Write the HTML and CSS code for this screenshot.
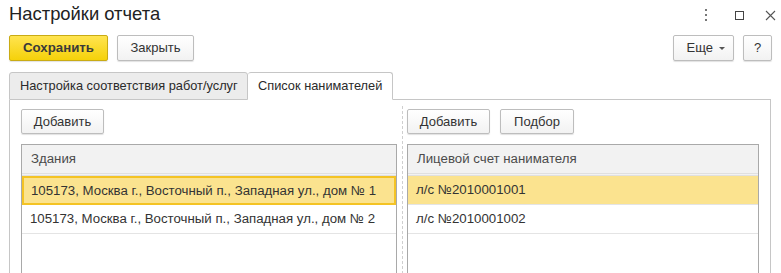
FILE: index.html
```html
<!DOCTYPE html>
<html lang="ru">
<head>
<meta charset="utf-8">
<title>Настройки отчета</title>
<link rel="stylesheet" href="styles.css">
</head>
<body>
<div class="window">
  <header class="titlebar">
    <h1 class="title">Настройки отчета</h1>
    <div class="win-ctrls">
      <svg class="ico ico-menu" width="10" height="14" viewBox="0 0 10 14"><rect x="4" y="1" width="2" height="2" fill="#777"/><rect x="4" y="6" width="2" height="2" fill="#777"/><rect x="4" y="11" width="2" height="2" fill="#777"/></svg>
      <svg class="ico ico-max" width="10" height="14" viewBox="0 0 10 14"><rect x="0.5" y="3.5" width="8" height="8" fill="none" stroke="#444"/></svg>
      <svg class="ico ico-close" width="11" height="14" viewBox="0 0 11 14"><path d="M1 3 L10 12 M10 3 L1 12" stroke="#555" stroke-width="1.1"/></svg>
    </div>
  </header>

  <div class="toolbar">
    <button class="btn btn-primary">Сохранить</button>
    <button class="btn btn-close">Закрыть</button>
    <div class="spacer"></div>
    <button class="btn btn-more">Еще <span class="caret"></span></button>
    <button class="btn btn-help">?</button>
  </div>

  <div class="tabs">
    <div class="tab">Настройка соответствия работ/услуг</div>
    <div class="tab tab-active">Список нанимателей</div>
    <div class="tab-fill"></div>
  </div>

  <div class="panel">
    <div class="col col-left">
      <div class="cmdbar">
        <button class="btn btn-small">Добавить</button>
      </div>
      <div class="grid">
        <div class="grid-head">Здания</div>
        <div class="grid-row row-selected row-focused">105173, Москва г., Восточный п., Западная ул., дом № 1</div>
        <div class="grid-row">105173, Москва г., Восточный п., Западная ул., дом № 2</div>
      </div>
    </div>
    <div class="separator"></div>
    <div class="col col-right">
      <div class="cmdbar">
        <button class="btn btn-small">Добавить</button>
        <button class="btn btn-small btn-pick">Подбор</button>
      </div>
      <div class="grid">
        <div class="grid-head">Лицевой счет нанимателя</div>
        <div class="grid-row row-selected">л/с №2010001001</div>
        <div class="grid-row">л/с №2010001002</div>
      </div>
    </div>
  </div>
</div>
</body>
</html>
```

FILE: styles.css
```css
* { box-sizing: border-box; }

html, body {
  margin: 0;
  padding: 0;
  background: #fff;
  overflow: hidden;
  height: 273px;
}

body {
  font-family: "Liberation Sans", Arial, sans-serif;
  font-size: 13.25px;
  color: #333;
}

.window {
  padding: 0 10px 0 9px;
}

.titlebar {
  display: flex;
  align-items: center;
  height: 28px;
}

.title {
  margin: 0;
  font-weight: normal;
  font-size: 18.4px;
  color: #222;
  flex: 1;
  line-height: 28px;
}

.win-ctrls {
  display: flex;
  align-items: center;
  margin-right: -5px;
  padding-top: 2px;
}

.ico { display: block; }

.ico-max { margin-left: 24px; }

.ico-close { margin-left: 20px; }

.toolbar {
  display: flex;
  align-items: center;
  margin-top: 7px;
  height: 26px;
}

.spacer { flex: 1; }

.btn {
  font-family: inherit;
  font-size: 13px;
  color: #333;
  height: 26px;
  padding: 0 12px;
  border: 1px solid #bdbdbd;
  border-radius: 2px;
  background: linear-gradient(#ffffff, #f2f2f2);
  box-shadow: 0 1px 1px rgba(0,0,0,0.12);
  cursor: default;
  line-height: 22px;
  white-space: nowrap;
}

.btn-primary {
  width: 99px;
  font-weight: bold;
  color: #3a3a3a;
  background: linear-gradient(#ffe450, #f5d10a);
  border-color: #c9ab14;
  font-size: 13.25px;
}

.btn-close {
  margin-left: 9px;
  width: 77px;
}

.btn-more {
  width: 61px;
  padding: 0 0 0 4px;
}

.caret {
  display: inline-block;
  width: 0;
  height: 0;
  border-left: 3px solid transparent;
  border-right: 3px solid transparent;
  border-top: 3px solid #555;
  vertical-align: middle;
  margin-left: 2px;
}

.btn-help {
  width: 29px;
  margin-left: 9px;
  padding: 0;
  margin-right: -1px;
}

.tabs {
  display: flex;
  margin-top: 11px;
  height: 28px;
}

.tab {
  flex: none;
  height: 28px;
  padding: 0 10px;
  line-height: 26px;
  font-size: 12.8px;
  background: #ececec;
  border: 1px solid #c6c6c6;
  border-radius: 3px 3px 0 0;
  color: #2a2a2a;
  width: 239px;
  white-space: nowrap;
}

.tab-active {
  background: #fff;
  border-left: none;
  border-bottom-color: #fff;
  width: 145px;
}

.tab-fill {
  flex: 1;
  border-bottom: 1px solid #c6c6c6;
}

.panel {
  display: grid;
  grid-template-columns: 376px 10px 1fr;
  border: 1px solid #c6c6c6;
  border-top: none;
  padding: 9px 10px 0 11px;
  height: 200px;
}

.cmdbar {
  display: flex;
  gap: 9px;
  height: 25px;
}

.btn-small {
  height: 25px;
  width: 83px;
  padding: 0;
}

.btn-pick {
  width: 74px;
  margin-left: 1px;
}

.separator {
  border-left: 1px dashed #cfcfcf;
  margin-left: 5px;
  margin-top: -3px;
}

.grid {
  margin-top: 10px;
  border: 1px solid #a9a9a9;
  height: 160px;
  background: #fff;
}

.col-right .grid {
  margin-right: 1px;
}

.grid-head {
  height: 31px;
  line-height: 28px;
  background: #f2f2f2;
  padding-left: 9px;
  color: #4a4a4a;
  border-bottom: 3px double #e0e0e0;
}

.grid-row {
  height: 29px;
  line-height: 27px;
  padding-left: 8px;
  border-bottom: 1px solid #e4e4e4;
  color: #333;
  white-space: nowrap;
  overflow: hidden;
}

.row-selected {
  background: #fbe38f;
}

.row-focused {
  border: 2px solid #f4c324;
  line-height: 25px;
  padding-left: 7px;
}
```
